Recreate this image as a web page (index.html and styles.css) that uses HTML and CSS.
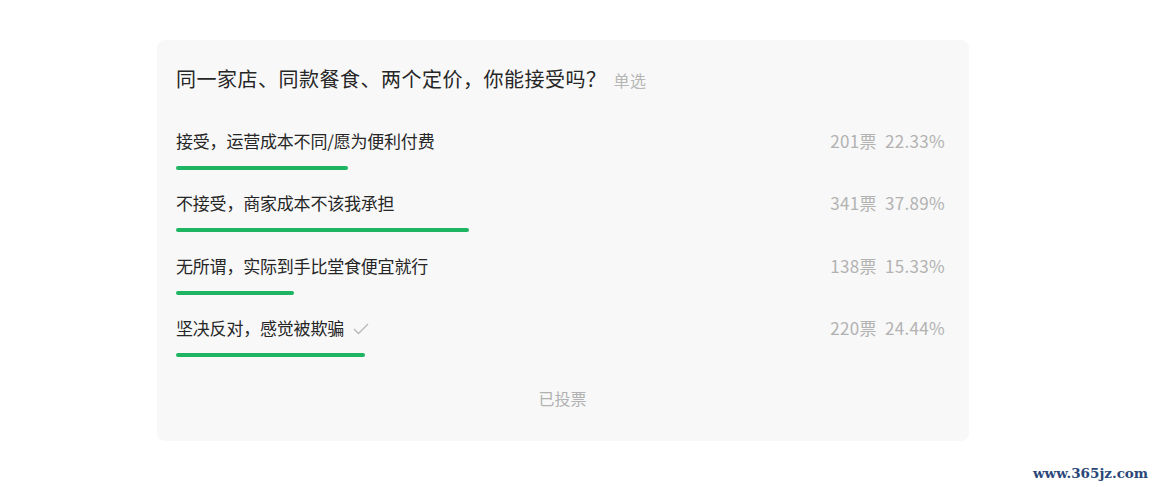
FILE: index.html
```html
<!DOCTYPE html>
<html lang="zh-CN">
<head>
<meta charset="utf-8">
<title>投票</title>
<link rel="stylesheet" href="styles.css">
</head>
<body>
<div class="card">
  <div class="title">同一家店、同款餐食、两个定价，你能接受吗？<span class="type">单选</span></div>
  <div class="option">
    <div class="row"><span class="label">接受，运营成本不同/愿为便利付费</span><span class="stat">201票&nbsp;&nbsp;22.33%</span></div>
    <div class="track"><div class="bar" style="width:22.33%"></div></div>
  </div>
  <div class="option">
    <div class="row"><span class="label">不接受，商家成本不该我承担</span><span class="stat">341票&nbsp;&nbsp;37.89%</span></div>
    <div class="track"><div class="bar" style="width:37.89%"></div></div>
  </div>
  <div class="option">
    <div class="row"><span class="label">无所谓，实际到手比堂食便宜就行</span><span class="stat">138票&nbsp;&nbsp;15.33%</span></div>
    <div class="track"><div class="bar" style="width:15.33%"></div></div>
  </div>
  <div class="option">
    <div class="row"><span class="label">坚决反对，感觉被欺骗<svg class="check" width="16" height="12" viewBox="0 0 16 12"><polyline points="1,6 5.5,10.5 15,1" fill="none" stroke="#b8b8b8" stroke-width="1.3"/></svg></span><span class="stat">220票&nbsp;&nbsp;24.44%</span></div>
    <div class="track"><div class="bar" style="width:24.44%"></div></div>
  </div>
  <div class="footer">已投票</div>
</div>
<div class="watermark">www.365jz.com</div>
</body>
</html>
```
FILE: styles.css
```css
html, body {
  margin: 0;
  padding: 0;
  background: #ffffff;
}
body {
  font-family: "Noto Sans CJK SC", "Microsoft YaHei", sans-serif;
  width: 1155px;
  height: 487px;
  position: relative;
  overflow: hidden;
}
.card {
  margin: 40px 0 0 157px;
  width: 812px;
  height: 401px;
  box-sizing: border-box;
  background: #f8f8f8;
  border-radius: 8px;
  padding: 23px 20px 0 19px;
}
.title {
  font-size: 20px;
  line-height: 32px;
  color: #262626;
  letter-spacing: 0.5px;
  margin-bottom: 33px;
}
.type {
  font-size: 16px;
  color: #b6b6b6;
  margin-left: 7px;
  letter-spacing: 0.5px;
}
.option {
  padding-bottom: 21.4px;
}
.row {
  display: flex;
  justify-content: space-between;
  align-items: center;
  height: 24px;
  line-height: 24px;
  margin-bottom: 13px;
  padding-right: 4px;
}
.label {
  font-size: 17px;
  color: #262626;
  display: flex;
  align-items: center;
  letter-spacing: -0.2px;
}
.check {
  margin-left: 9px;
  margin-top: 1px;
}
.stat {
  font-size: 17px;
  color: #b2b2b2;
  letter-spacing: 0.3px;
}
.track {
  height: 4px;
  width: 772px;
}
.bar {
  height: 4px;
  border-radius: 2px;
  background: #1db462;
}
.footer {
  text-align: center;
  font-size: 16px;
  line-height: 24px;
  color: #b2b2b2;
  margin-top: 7px;
}
.watermark {
  position: absolute;
  left: 1033px;
  top: 465px;
  font-family: "DejaVu Serif", serif;
  font-size: 13.5px;
  font-weight: bold;
  color: #2a4778;
}
```
